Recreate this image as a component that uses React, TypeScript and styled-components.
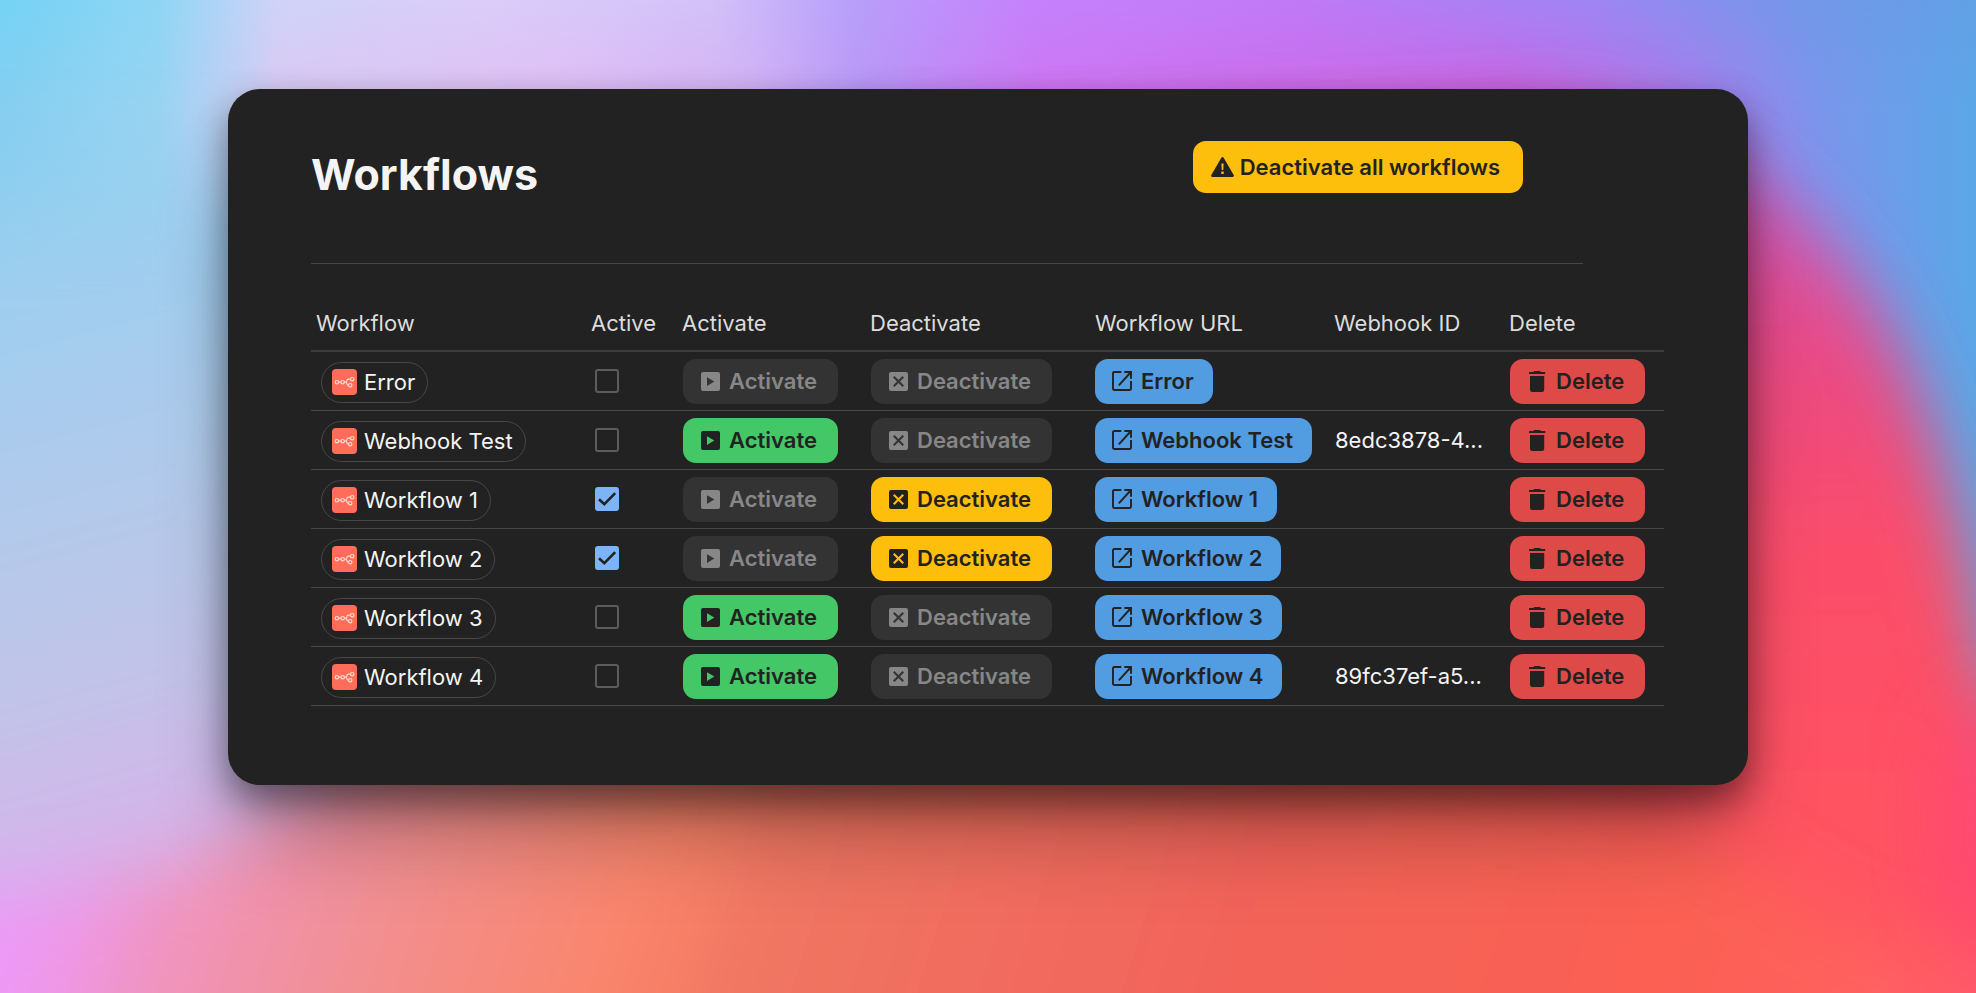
import React from "react";
import styled, { createGlobalStyle, css } from "styled-components";

const colors = {
  card: "#222222",
  line: "#474747",
  text: "#f4f4f4",
  heading: "#dcdcdc",
  ink: "#222222",
  disabled: "#333333",
  disabledText: "#878787",
  green: "#44c767",
  amber: "#fdbe0c",
  blue: "#529ce2",
  red: "#dd4a48",
  tick: "#7cb5f7",
  brand: "#ff6d5a",
};

const GlobalStyle = createGlobalStyle`
  *, *::before, *::after { box-sizing: border-box; }
  body {
    margin: 0;
    font-family: Inter, "Liberation Sans", sans-serif;
    font-size: 22px;
    line-height: 28px;
    color: ${colors.text};
    background: #ee6a5c;
  }
`;

const Page = styled.main`
  position: relative;
  isolation: isolate;
  min-height: 100vh;
  padding: 89px 32px;
  overflow: hidden;
`;

const WallpaperSvg = styled.svg`
  position: absolute;
  inset: 0;
  z-index: -1;
  width: 100%;
  height: 100%;
`;

const Card = styled.section`
  max-width: 1520px;
  margin: 0 auto;
  padding: 52px 84px 79px 83px;
  border-radius: 32px;
  background: ${colors.card};
  box-shadow: 0 64px 90px -20px rgba(0, 0, 0, 0.32), 0 16px 36px rgba(0, 0, 0, 0.46);
`;

const CardHeader = styled.header`
  display: flex;
  justify-content: space-between;
  align-items: flex-start;
  margin: 0 81px 31px 0;
  padding: 0 60px 63px 0;
  border-bottom: 1px solid ${colors.line};
`;

const Title = styled.h1`
  margin: 7px 0 0;
  font-size: 43px;
  line-height: 52px;
  font-weight: 700;
`;

const Table = styled.table`
  width: 100%;
  table-layout: fixed;
  border-collapse: separate;
  border-spacing: 0;
`;

const Col = styled.col<{ $width?: number }>`
  ${(p) => p.$width && `width: ${p.$width}px;`}
`;

const HeadCell = styled.th`
  height: 57px;
  padding: 0 5px;
  border-bottom: 2px solid #3d3d3d;
  text-align: left;
  font-weight: 400;
  white-space: nowrap;
  color: ${colors.heading};
`;

const Cell = styled.td<{ $low?: boolean }>`
  height: 59px;
  padding: ${(p) => (p.$low ? "9px 10px 7px" : "6px 5px")};
  border-bottom: 1px solid ${colors.line};
  vertical-align: middle;
  white-space: nowrap;
`;

const Clipped = styled.div`
  padding-left: 1px;
  overflow: hidden;
  text-overflow: ellipsis;
`;

const Pill = styled.span`
  display: flex;
  align-items: center;
  gap: 7px;
  width: max-content;
  height: 41px;
  padding: 0 12px 1px 10px;
  border: 1px solid ${colors.line};
  border-radius: 21px;
`;

const Tick = styled.label`
  display: grid;
  width: 24px;
  height: 24px;
  margin-left: 4px;

  > * {
    grid-area: 1 / 1;
  }
`;

const TickInput = styled.input`
  appearance: none;
  width: 24px;
  height: 24px;
  margin: 0;
  border: 2px solid #5c5c5c;
  border-radius: 3px;

  &:checked {
    border-color: ${colors.tick};
    background: ${colors.tick};
  }

  & + svg {
    visibility: hidden;
    pointer-events: none;
  }

  &:checked + svg {
    visibility: visible;
  }
`;

type Tone = "green" | "amber" | "blue" | "red";

const buttonLook = css<{ $tone: Tone }>`
  display: flex;
  align-items: center;
  width: max-content;
  height: 45px;
  border: 0;
  border-radius: 13px;
  font: inherit;
  font-weight: 600;
  text-decoration: none;
  color: ${colors.ink};
  background: ${(p) => colors[p.$tone]};
  cursor: pointer;
`;

const ActionButton = styled.button<{ $tone: Tone }>`
  ${buttonLook}
  gap: 9px;
  padding: 0 21px 0 18px;
  margin-left: 1px;

  &:disabled {
    color: ${colors.disabledText};
    background: ${colors.disabled};
    cursor: default;
  }
`;

const LinkButton = styled.a<{ $tone: Tone }>`
  ${buttonLook}
  gap: 9px;
  padding: 0 19px 0 17px;
`;

const MainButton = styled.button<{ $tone: Tone }>`
  ${buttonLook}
  gap: 6px;
  height: 52px;
  padding: 0 23px 0 18px;
`;

const PlayBoxIcon = () => (
  <svg width="19" height="19" viewBox="0 0 19 19" aria-hidden="true">
    <path
      fill="currentColor"
      fillRule="evenodd"
      d="M2 0H17A2 2 0 0 1 19 2V17A2 2 0 0 1 17 19H2A2 2 0 0 1 0 17V2A2 2 0 0 1 2 0ZM6 5.3V13.9L13.3 9.6Z"
    />
  </svg>
);

const CloseBoxIcon = () => (
  <svg width="19" height="19" viewBox="0 0 19 19" aria-hidden="true">
    <path
      fill="currentColor"
      fillRule="evenodd"
      d="M2 0H17A2 2 0 0 1 19 2V17A2 2 0 0 1 17 19H2A2 2 0 0 1 0 17V2A2 2 0 0 1 2 0ZM5.5 4L4 5.5L8 9.5L4 13.5L5.5 15L9.5 11L13.5 15L15 13.5L11 9.5L15 5.5L13.5 4L9.5 8Z"
    />
  </svg>
);

const OpenIcon = () => (
  <svg width="20" height="20" viewBox="0 0 20 20" fill="none" stroke="currentColor" strokeWidth="1.9" aria-hidden="true">
    <path d="M9.3 1H2.2Q1 1 1 2.2V17.8Q1 19 2.2 19H17.8Q19 19 19 17.8V10" />
    <path d="M12.3 1H19V7.7M19 1L6.8 14.4" />
  </svg>
);

const TrashIcon = () => (
  <svg width="19" height="21" viewBox="0 0 19 21" fill="currentColor" aria-hidden="true">
    <path d="M6.3 0H12L13 1H17.2V3H1V1H5.3Z" />
    <path d="M2 5H16.2V18.8A2.2 2.2 0 0 1 14 21H4.2A2.2 2.2 0 0 1 2 18.8Z" />
  </svg>
);

const WarningIcon = () => (
  <svg width="23" height="20" viewBox="0 0 23 20" aria-hidden="true">
    <path
      fill="currentColor"
      fillRule="evenodd"
      d="M10.5 0.6Q11.5 -0.6 12.5 0.6L22.8 18.2Q23.2 19.8 21.8 20H1.2Q-0.2 19.8 0.2 18.2ZM10.4 6.5L10.7 13H12.3L12.6 6.5ZM10.3 14.6V17H12.7V14.6Z"
    />
  </svg>
);

const CheckIcon = () => (
  <svg width="24" height="24" viewBox="0 0 24 24" fill="none" stroke={colors.ink} strokeWidth="2.6" aria-hidden="true">
    <path d="M4 12.2L9.3 17.2L20.2 6.2" />
  </svg>
);

const FlowLogo = () => (
  <svg width="25" height="26" viewBox="0 0 25 26" aria-hidden="true">
    <rect width="25" height="26" rx="4" fill={colors.brand} />
    <g fill="none" stroke="#ffd9d2" strokeWidth="1.2">
      <circle cx="4.9" cy="13.2" r="1.7" />
      <circle cx="10.7" cy="13.2" r="1.7" />
      <circle cx="20.2" cy="10.2" r="1.7" />
      <circle cx="18.2" cy="16.2" r="1.7" />
      <path d="M6.6 13.2H9M12.4 13.2H13.4Q14.6 13.2 14.8 11.8Q15 10.2 16.6 10.2H18.5M13.4 13.2Q14.6 13.2 14.8 14.6Q15 16.2 16.5 16.2" />
    </g>
  </svg>
);

const Wallpaper = () => (
  <WallpaperSvg viewBox="0 0 1976 993" preserveAspectRatio="none" aria-hidden="true">
    <defs>
      <linearGradient id="sky">
        <stop offset="0" stopColor="#74d3f4" />
        <stop offset="0.08" stopColor="#8fd6f5" />
        <stop offset="0.14" stopColor="#d0d3f8" />
        <stop offset="0.25" stopColor="#dbcdfa" />
        <stop offset="0.36" stopColor="#d3c2f8" />
        <stop offset="0.43" stopColor="#b8a0fa" />
        <stop offset="0.52" stopColor="#c582fc" />
        <stop offset="0.66" stopColor="#c07af6" />
        <stop offset="0.8" stopColor="#a184f3" />
        <stop offset="0.91" stopColor="#7497ea" />
        <stop offset="1" stopColor="#62a1e5" />
      </linearGradient>
      <linearGradient id="skyLow">
        <stop offset="0" stopColor="#86cef0" />
        <stop offset="0.08" stopColor="#98d3f2" />
        <stop offset="0.11" stopColor="#b8cff2" />
        <stop offset="0.14" stopColor="#dac8f3" />
        <stop offset="0.28" stopColor="#e0bdf4" />
        <stop offset="0.38" stopColor="#d2b0f4" />
        <stop offset="0.44" stopColor="#b896f6" />
        <stop offset="0.53" stopColor="#cf74f2" />
        <stop offset="0.76" stopColor="#cb62e4" />
        <stop offset="0.86" stopColor="#a67fec" />
        <stop offset="0.92" stopColor="#7b95ec" />
        <stop offset="1" stopColor="#5aa7e6" />
      </linearGradient>
      <linearGradient id="fade" x1="0" y1="0" x2="0" y2="1">
        <stop offset="0" stopColor="#fff" stopOpacity="0" />
        <stop offset="0.11" stopColor="#fff" stopOpacity="1" />
      </linearGradient>
      <mask id="fadeDown">
        <rect width="1976" height="993" fill="url(#fade)" />
      </mask>
      <linearGradient id="left" gradientUnits="userSpaceOnUse" x1="0" y1="120" x2="190" y2="820">
        <stop offset="0" stopColor="#8dd0f0" />
        <stop offset="0.3" stopColor="#a3cdee" />
        <stop offset="0.65" stopColor="#b9c8e9" />
        <stop offset="0.88" stopColor="#c8bfe9" />
        <stop offset="1" stopColor="#d6b2ea" />
      </linearGradient>
      <linearGradient id="floor" gradientUnits="userSpaceOnUse" x1="0" y1="800" x2="1900" y2="1400">
        <stop offset="0" stopColor="#ec9bff" />
        <stop offset="0.05" stopColor="#ee98ec" />
        <stop offset="0.1" stopColor="#f094be" />
        <stop offset="0.2" stopColor="#f28f90" />
        <stop offset="0.33" stopColor="#fa8468" />
        <stop offset="0.38" stopColor="#f07663" />
        <stop offset="0.6" stopColor="#f2645a" />
        <stop offset="0.82" stopColor="#fb6052" />
        <stop offset="0.93" stopColor="#ff6260" />
        <stop offset="1" stopColor="#ff5670" />
      </linearGradient>
      <linearGradient id="arch" gradientUnits="userSpaceOnUse" x1="0" y1="170" x2="0" y2="800">
        <stop offset="0" stopColor="#d156b8" />
        <stop offset="0.3" stopColor="#ea4a84" />
        <stop offset="0.6" stopColor="#fb4d6a" />
        <stop offset="1" stopColor="#ff5262" />
      </linearGradient>
      <filter id="soft" x="-50%" y="-50%" width="200%" height="200%">
        <feGaussianBlur stdDeviation="34" />
      </filter>
      <filter id="softer" x="-50%" y="-50%" width="200%" height="200%">
        <feGaussianBlur stdDeviation="50" />
      </filter>
    </defs>
    <rect width="1976" height="993" fill="url(#sky)" />
    <rect width="1976" height="993" fill="url(#skyLow)" mask="url(#fadeDown)" />
    <rect x="-200" y="190" width="500" height="1000" fill="url(#left)" filter="url(#softer)" />
    <path
      d="M900 150L1560 110C1700 130 1770 170 1850 270C1920 370 1960 500 1990 680L2200 1200H900Z"
      fill="url(#arch)"
      filter="url(#soft)"
    />
    <path
      d="M-200 900L60 890L200 860L360 750L1300 700L1700 830L1860 930L2200 1010V1200H-200Z"
      fill="url(#floor)"
      filter="url(#soft)"
    />
    <ellipse cx="1990" cy="820" rx="60" ry="130" fill="#ff4676" opacity="0.8" filter="url(#soft)" />
  </WallpaperSvg>
);

interface Workflow {
  name: string;
  active: boolean;
  canActivate: boolean;
  canDeactivate: boolean;
  webhookId?: string;
}

const workflows: Workflow[] = [
  { name: "Error", active: false, canActivate: false, canDeactivate: false },
  { name: "Webhook Test", active: false, canActivate: true, canDeactivate: false, webhookId: "8edc3878-4..." },
  { name: "Workflow 1", active: true, canActivate: false, canDeactivate: true },
  { name: "Workflow 2", active: true, canActivate: false, canDeactivate: true },
  { name: "Workflow 3", active: false, canActivate: true, canDeactivate: false },
  { name: "Workflow 4", active: false, canActivate: true, canDeactivate: false, webhookId: "89fc37ef-a5..." },
];

const columns: { title: string; width?: number }[] = [
  { title: "Workflow" },
  { title: "Active", width: 91 },
  { title: "Activate", width: 188 },
  { title: "Deactivate", width: 225 },
  { title: "Workflow URL", width: 239 },
  { title: "Webhook ID", width: 175 },
  { title: "Delete", width: 160 },
];

const WorkflowRow = ({ workflow }: { workflow: Workflow }) => (
  <tr>
    <Cell $low>
      <Pill>
        <FlowLogo />
        {workflow.name}
      </Pill>
    </Cell>
    <Cell>
      <Tick>
        <TickInput type="checkbox" defaultChecked={workflow.active} aria-label={`${workflow.name} active`} />
        <CheckIcon />
      </Tick>
    </Cell>
    <Cell>
      <ActionButton type="button" $tone="green" disabled={!workflow.canActivate}>
        <PlayBoxIcon />
        Activate
      </ActionButton>
    </Cell>
    <Cell>
      <ActionButton type="button" $tone="amber" disabled={!workflow.canDeactivate}>
        <CloseBoxIcon />
        Deactivate
      </ActionButton>
    </Cell>
    <Cell>
      <LinkButton href="#" $tone="blue">
        <OpenIcon />
        {workflow.name}
      </LinkButton>
    </Cell>
    <Cell>
      <Clipped>{workflow.webhookId}</Clipped>
    </Cell>
    <Cell>
      <ActionButton type="button" $tone="red">
        <TrashIcon />
        Delete
      </ActionButton>
    </Cell>
  </tr>
);

export default function App() {
  return (
    <Page>
      <GlobalStyle />
      <Wallpaper />
      <Card>
        <CardHeader>
          <Title>Workflows</Title>
          <MainButton type="button" $tone="amber">
            <WarningIcon />
            Deactivate all workflows
          </MainButton>
        </CardHeader>
        <Table>
          <colgroup>
            {columns.map((c) => (
              <Col key={c.title} $width={c.width} />
            ))}
          </colgroup>
          <thead>
            <tr>
              {columns.map((c) => (
                <HeadCell key={c.title} scope="col">
                  {c.title}
                </HeadCell>
              ))}
            </tr>
          </thead>
          <tbody>
            {workflows.map((w) => (
              <WorkflowRow key={w.name} workflow={w} />
            ))}
          </tbody>
        </Table>
      </Card>
    </Page>
  );
}
